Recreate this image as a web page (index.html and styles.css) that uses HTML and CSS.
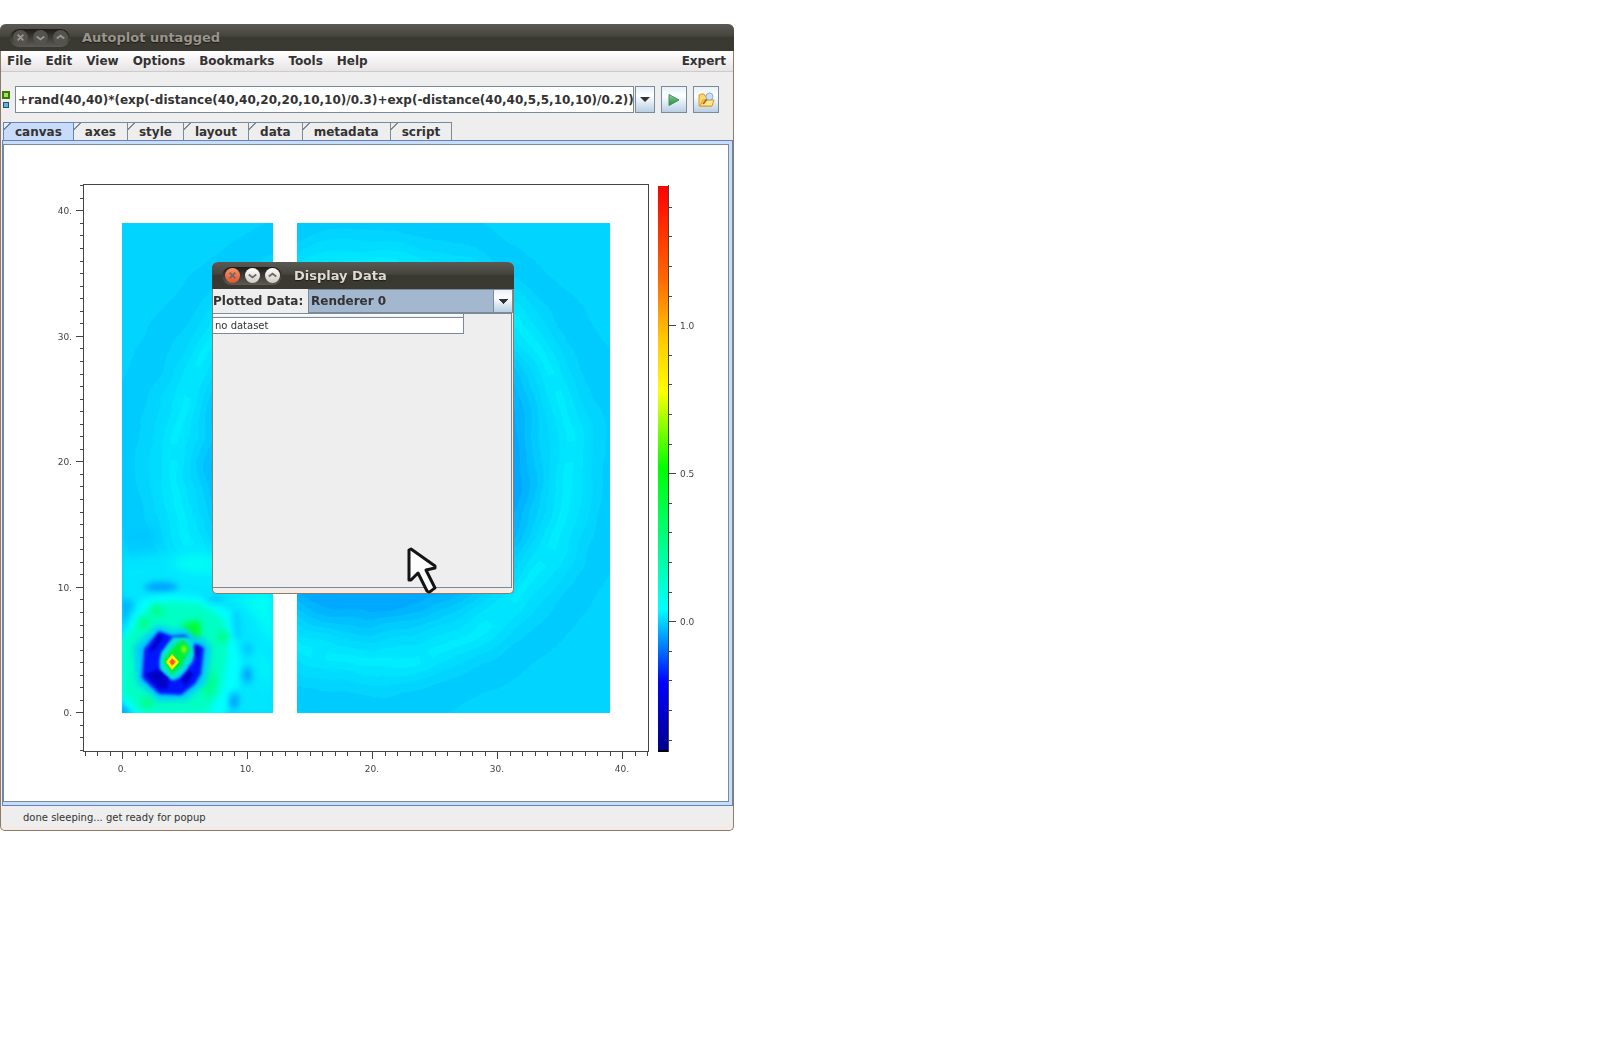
FILE: index.html
```html
<!DOCTYPE html>
<html lang="en">
<head>
<meta charset="utf-8">
<title>Autoplot untagged</title>
<link rel="stylesheet" href="styles.css">
</head>
<body>
<main class="desktop">
  <section class="window app" aria-label="Autoplot untagged">
    <header class="titlebar">
      <div class="controls">
        <button class="ctl" aria-label="Close"><svg viewBox="0 0 16 16"><path d="M5 5l6 6M11 5l-6 6"/></svg></button>
        <button class="ctl" aria-label="Minimize"><svg viewBox="0 0 16 16"><path d="M4 7l4 3 4-3"/></svg></button>
        <button class="ctl" aria-label="Maximize"><svg viewBox="0 0 16 16"><path d="M4 9l4-3 4 3"/></svg></button>
      </div>
      <h1 class="title">Autoplot untagged</h1>
    </header>
    <nav class="menubar">
      <button>File</button><button>Edit</button><button>View</button><button>Options</button><button>Bookmarks</button><button>Tools</button><button>Help</button><button class="mode">Expert</button>
    </nav>
    <form class="address">
      <div class="lights"><span class="light ready"></span><span class="light idle"></span></div>
      <input class="uri" type="text" aria-label="Data address" value="+rand(40,40)*(exp(-distance(40,40,20,20,10,10)/0.3)+exp(-distance(40,40,5,5,10,10)/0.2))">
      <button type="button" class="metal drop" aria-label="Recent addresses"><svg width="10" height="6" viewBox="0 0 10 6"><path d="M0 0h10L5 5z" fill="#333"/></svg></button>
      <button type="button" class="metal tool" aria-label="Plot"><svg width="12" height="14" viewBox="0 0 12 14"><defs><linearGradient id="go" x2="0" y2="1"><stop stop-color="#a4d6ac"/><stop offset=".5" stop-color="#4fae68"/><stop offset="1" stop-color="#2d8750"/></linearGradient></defs><path d="M1 1.500L11 7 1 12.500z" fill="url(#go)" stroke="#3b9459"/></svg></button>
      <button type="button" class="metal tool" aria-label="Browse"><svg width="17" height="16" viewBox="0 0 17 16"><path d="M1 14V3l2-1h3l1 2h7v10z" fill="#fbd767" stroke="#d89a27"/><path d="M2 14l3-6h11l-2 6z" fill="#ffe98d" stroke="#d89a27"/><path d="M9 7l-4 5" stroke="#a96b3b" stroke-width="2"/><circle cx="11.500" cy="4.500" r="3.500" fill="#c9e2fb" stroke="#8cadd3"/></svg></button>
    </form>
    <div class="tabs" role="tablist">
      <button role="tab" class="tab active" aria-selected="true">canvas</button><button role="tab" class="tab">axes</button><button role="tab" class="tab">style</button><button role="tab" class="tab">layout</button><button role="tab" class="tab">data</button><button role="tab" class="tab">metadata</button><button role="tab" class="tab">script</button>
    </div>
    <div class="panel">
      <svg class="plot" viewBox="4 145 724 656" role="img" aria-label="Spectrogram with colorbar">
        <defs>
          <clipPath id="data"><path d="M122 223h151v490H122zM297 223h313v490H297z"/></clipPath>
          <filter id="rough" x="-5%" y="-5%" width="110%" height="110%"><feTurbulence type="fractalNoise" baseFrequency=".02" numOctaves="2" seed="4"/><feDisplacementMap in="SourceGraphic" scale="16" xChannelSelector="R" yChannelSelector="G"/></filter>
          <filter id="soft1" x="-50%" y="-50%" width="200%" height="200%"><feGaussianBlur stdDeviation="1.800"/></filter>
          <filter id="soft3" x="-50%" y="-50%" width="200%" height="200%"><feGaussianBlur stdDeviation="3"/></filter>
          <filter id="soft6" x="-50%" y="-50%" width="200%" height="200%"><feGaussianBlur stdDeviation="6"/></filter>
          <linearGradient id="ramp" gradientUnits="userSpaceOnUse" x1="0" y1="186" x2="0" y2="750">
            <stop offset="0" stop-color="#f00"/><stop offset=".16" stop-color="#ff6400"/><stop offset=".27" stop-color="#ffc800"/><stop offset=".365" stop-color="#ff0"/><stop offset=".5" stop-color="#0f0"/><stop offset=".75" stop-color="#0ff"/><stop offset=".88" stop-color="#00f"/><stop offset="1" stop-color="#00008b"/>
          </linearGradient>
        </defs>
        <g clip-path="url(#data)">
          <path d="M122 223h488v490H122z" fill="#00d4ff"/>
          <g filter="url(#rough)">
            <circle cx="372" cy="462" r="260" fill="#00cbff"/>
            <circle cx="372" cy="462" r="233" fill="#00d4ff"/>
            <circle cx="372" cy="462" r="222" fill="#00dcff"/>
            <circle cx="372" cy="462" r="212" fill="#00e5ff"/>
            <circle cx="372" cy="462" r="199" fill="none" stroke="#00edff" stroke-width="8" stroke-dasharray="90 16 50 30 70 12"/>
            <circle cx="372" cy="462" r="187" fill="#00dcff"/>
            <circle cx="372" cy="462" r="179" fill="#00d4ff"/>
            <circle cx="372" cy="462" r="172" fill="#00cbff"/>
            <circle cx="372" cy="462" r="165" fill="#00c0ff"/>
            <circle cx="372" cy="462" r="158" fill="#00b4ff"/>
            <circle cx="372" cy="462" r="150" fill="#00a8ff"/>
          </g>
          <g filter="url(#soft6)">
            <path d="M120 558l70-10h88v168H120z" fill="#00e6ff"/>
            <ellipse cx="140" cy="536" rx="20" ry="8" fill="#00c8ff"/>
            <path d="M172 560q30-10 42 0t-4 12q-30 4-38-12z" fill="#00fff4"/>
            <path d="M235 600l20 12 18 38v-60zM250 640l20 30v20z" fill="#00fff4"/>
          </g>
          <ellipse cx="161" cy="587" rx="17" ry="5" fill="#00a0ff" filter="url(#soft3)"/>
          <path d="M119 600q18-4 14 8l-10 20z" fill="#00baff" filter="url(#soft3)"/>
          <path d="M142 599q40-10 70 3l20 10 4 30q10 26 2 45l-14 30H132l-14-18v-52z" fill="#0ff" filter="url(#soft3)"/>
          <path d="M150 605q25-7 54 0l21 15 3 35-7 37-14 22h-65l-20-21v-51z" fill="#00ffc4" filter="url(#soft3)"/>
          <g fill="#00ff88" filter="url(#soft3)"><circle cx="157" cy="611" r="6"/><circle cx="144" cy="623" r="6"/><circle cx="223" cy="637" r="6"/><path d="M211 665l5 18-7 17-6-8z"/><circle cx="147" cy="702" r="6"/></g>
          <path d="M181 625l18-5 2 13-7 12-5-11z" fill="#0f2" filter="url(#soft3)"/>
          <path d="M158 625l13 5 15-1 10 9h7l8 10-5 34-20 18-27 1-22-19-3-36z" fill="#00c8ff" filter="url(#soft3)"/>
          <path d="M159 631l13 5 12-1 5 2-7 3-12 4-10 15 1 12 11 9 8-2 13-17-1-16 5-1 7 4-3 26-6 10-14 11-22-1-17-16 2-29z" fill="#0018ff" filter="url(#soft1)"/>
          <path d="M158 634l5 3-7 11-7 5zM145 674l14-5 10 10-2 10-9-1zM195 647l4-1-1 10-3 2zM181 679l8-8 5 3-9 12z" fill="#0000c8" filter="url(#soft1)"/>
          <path d="M173 637h13l7 5 1 14-10 15-11 9-13-12 1-15z" fill="#00e5d5" filter="url(#soft1)"/>
          <path d="M163 661l9-13 11-9 7 10-8 16-10 10z" fill="#00ee35" filter="url(#soft1)"/>
          <path d="M184 645l3 4-3 5-3-5z" fill="#9f0" filter="url(#soft1)"/>
          <path d="M172 654l7 8-7 8-6-8z" fill="#ff0"/><path d="M172 658l4 4-4 4-3-4z" fill="#ff8000"/><path d="M171 660h3v4h-3z" fill="#f52"/>
          <g fill="#00a4ff" filter="url(#soft3)"><ellipse cx="247" cy="675" rx="5" ry="8"/><ellipse cx="234" cy="701" rx="5" ry="9"/><ellipse cx="248" cy="649" rx="5" ry="6" opacity=".5"/><ellipse cx="215" cy="599" rx="9" ry="3" opacity=".5"/><path d="M233 612h5l2 26h-5z" opacity=".5"/><path d="M119 702l14 14h-14z"/></g>
        </g>
        <path d="M658 186h10v564h-10z" fill="url(#ramp)"/><path d="M658 750h10v2h-10z"/>
        <g fill="none" stroke="#444" shape-rendering="crispEdges">
          <path d="M83.500 184.500h565v567h-565z"/>
          <path d="M668.500 185v567"/>
          <path d="M84.500 753.500H648" stroke-width="4" stroke-dasharray="1 11.500"/>
          <path d="M81.500 751V184" stroke-width="4" stroke-dasharray="1 11.550"/>
          <path d="M670.500 740.500V200" stroke-width="3" stroke-dasharray="1 28.600"/>
          <path d="M122.500 752v7M247.500 752v7M372.500 752v7M497.500 752v7M622.500 752v7M76 712.500h7M76 587.500h7M76 461.500h7M76 336.500h7M76 210.500h7M669 621.500h7M669 473.500h7M669 325.500h7"/>
        </g>
        <g class="ticks" text-anchor="middle"><text x="122" y="772">0.</text><text x="247" y="772">10.</text><text x="372" y="772">20.</text><text x="497" y="772">30.</text><text x="622" y="772">40.</text></g>
        <g class="ticks" text-anchor="end"><text x="72" y="716">0.</text><text x="72" y="591">10.</text><text x="72" y="465">20.</text><text x="72" y="340">30.</text><text x="72" y="214">40.</text></g>
        <g class="ticks"><text x="680" y="625">0.0</text><text x="680" y="477">0.5</text><text x="680" y="329">1.0</text></g>
      </svg>
    </div>
    <footer class="status">done sleeping... get ready for popup</footer>
  </section>

  <section class="window dialog" role="dialog" aria-label="Display Data">
    <header class="titlebar">
      <div class="controls">
        <button class="ctl close" aria-label="Close"><svg viewBox="0 0 16 16"><path d="M5 5l6 6M11 5l-6 6"/></svg></button>
        <button class="ctl" aria-label="Minimize"><svg viewBox="0 0 16 16"><path d="M4 7l4 3 4-3"/></svg></button>
        <button class="ctl" aria-label="Maximize"><svg viewBox="0 0 16 16"><path d="M4 9l4-3 4 3"/></svg></button>
      </div>
      <h2 class="title">Display Data</h2>
    </header>
    <div class="picker">
      <label for="renderer">Plotted Data:</label>
      <select id="renderer"><option>Renderer 0</option></select>
    </div>
    <div class="table-pane">
      <div class="column-head"></div>
      <input class="cell" type="text" aria-label="Dataset" value="no dataset">
    </div>
  </section>

  <svg class="cursor" width="36" height="50" viewBox="0 0 36 50" aria-hidden="true"><path d="M4 4v30h2l7-7 9 18q2 2 4 0t4-3l-9-18 9-2v-2L6 3z" fill="#fdfdfd" stroke="#141414" stroke-width="3" stroke-linejoin="round"/></svg>
</main>
</body>
</html>
```
FILE: styles.css
```css
* { box-sizing: border-box; }
body { margin: 0; background: #fff; color: #333; font: bold 12px/16px "DejaVu Sans", sans-serif; }
button, input, select { margin: 0; padding: 0; border: 0; border-radius: 0; background: none; color: inherit; font: inherit; }
.desktop { position: relative; min-height: 100vh; padding-top: 24px; overflow: hidden; }
.window { display: flex; flex-direction: column; background: #eee; border: 1px solid #8c7b6b; border-top: 0; border-radius: 6px 6px 5px 5px; }
.app { width: 100%; max-width: 734px; padding-bottom: 4px; box-shadow: inset 0 -4px #f5ebe6; }
.dialog { position: absolute; left: 212px; top: 262px; width: 302px; height: 332px; padding-bottom: 4px; box-shadow: inset 0 -4px #f5ebe6; }

.titlebar { display: flex; align-items: center; gap: 12px; height: 27px; padding-left: 10px; margin: 0 -1px; background: linear-gradient(#5b5953, #45443d 45%, #3a3931 50%, #3b3a32); border-radius: 6px 6px 0 0; }
.title { margin: 0; padding-top: 1px; font-size: 13px; line-height: 16px; color: #dfdbd2; text-shadow: 0 1px 1px #1d1a1a; }
.app .title { color: #9a958a; }
.controls { display: flex; align-items: center; gap: 5px; width: 60px; height: 18px; padding: 0 3px; border-radius: 9px; background: linear-gradient(#1d1c19, #5d5b55); }
.ctl { display: flex; flex: none; width: 15px; height: 15px; border-radius: 8px; background: linear-gradient(#fff, #cfcbc4); }
.ctl svg { width: 15px; height: 15px; fill: none; stroke: #6e6b64; stroke-width: 2; }
.ctl.close { background: linear-gradient(#f9926b, #e4542a); }
.app .ctl { background: #55534d; }
.app .ctl svg { stroke: #9b988f; }

.menubar { display: flex; height: 21px; align-items: center; background: linear-gradient(#fff, #e8e4e6); border-bottom: 1px solid #ccc; }
.menubar button { padding: 0 7px; height: 20px; line-height: 16px; }
.menubar button:first-child { padding-left: 6px; }
.menubar .mode { margin-left: auto; }

.address { display: flex; align-items: center; padding: 14px 14px 9px 1px; }
.lights { display: flex; flex-direction: column; align-items: center; gap: 3px; width: 8px; margin-right: 5px; }
.light.ready { width: 8px; height: 8px; background: #a6dc6d; border: 2px solid #3c7c02; }
.light.idle { width: 6px; height: 6px; background: #69b2d6; border: 1px solid #1d5673; }
.uri { flex: 1; min-width: 0; height: 27px; padding: 1px 0 0 2px; background: #fff; border: 1px solid #7a8a99; outline: 0; }
.metal { display: flex; flex: none; align-items: center; justify-content: center; width: 26px; height: 27px; border: 1px solid #7a8a99; background: linear-gradient(#e9f0f8, #fff 35%, #b8cfe5); }
.drop { width: 20px; margin-left: 1px; }
.tool { margin-left: 6px; }

.tabs { display: flex; height: 18px; padding-left: 2px; }
.tab { height: 18px; padding: 1px 11px 0; line-height: 16px; border: 1px solid #7a8a99; border-left: 0; border-bottom: 0; background: linear-gradient(135deg, #eee 4px, #7a8a99 4px, #7a8a99 5px, #eee 5px); }
.tab.active { border-color: #6382bf; background: linear-gradient(135deg, #eee 4px, #6382bf 4px, #6382bf 5px, #c8dcfa 5px); border-left: 1px solid #6382bf; }
.panel { margin-left: 1px; padding: 3px 3px 3px 0; border: 1px solid #6382bf; background: #c8ddf9; }
.plot { display: block; width: 100%; height: auto; background: #fff; border: 1px solid #7a8a99; }
.ticks { font: normal 9px "DejaVu Sans", sans-serif; fill: #444; }
.status { height: 20px; padding: 2px 0 0 22px; font-weight: normal; font-size: 10px; line-height: 20px; }

.picker { display: flex; align-items: center; height: 24px; }
.picker label { width: 95px; white-space: nowrap; }
.picker select { flex: 1; min-width: 0; height: 24px; padding: 0 0 1px 2px; border: 1px solid #7a8a99; appearance: none; background:
  conic-gradient(from -45deg at 50% 100%, #333 90deg, transparent 0) right 4px center / 10px 5px no-repeat,
  linear-gradient(#e9f0f8, #fff 35%, #b8cfe5) right / 18px 100% no-repeat,
  linear-gradient(#7a8a99, #7a8a99) right 18px top / 1px 100% no-repeat, #a3b8cf; }
.table-pane { flex: 1; margin-right: 1px; margin-bottom: 1px; border: 1px solid #7a8a99; border-left-width: 0; }
.column-head { width: 251px; height: 3px; background: linear-gradient(#fff, #eee); border-right: 1px solid #7a8a99; }
.cell { display: block; width: 251px; height: 17px; padding: 0 2px; background: #fff; border: 1px solid #7a8a99; border-left: 0; font-weight: normal; font-size: 10px; outline: 0; }
.cursor { position: absolute; left: 405px; top: 546px; }
```
